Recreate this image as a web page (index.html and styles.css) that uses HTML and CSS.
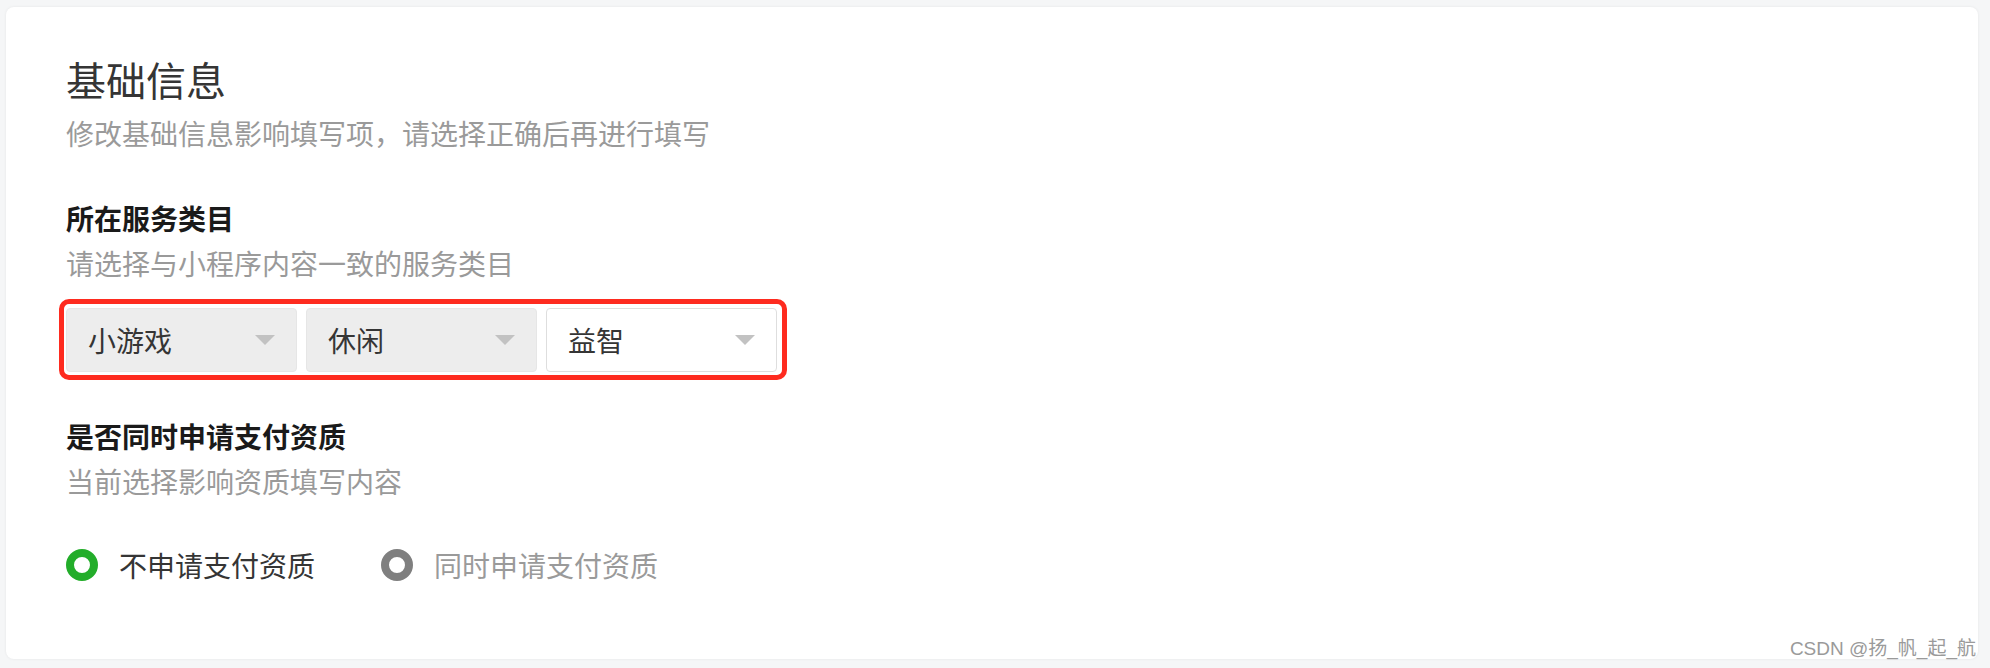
FILE: index.html
```html
<!DOCTYPE html>
<html lang="zh-CN">
<head>
<meta charset="utf-8">
<title>基础信息</title>
<link rel="stylesheet" href="styles.css">
</head>
<body>
<div class="page">
  <section class="card">
    <h1 class="title">基础信息</h1>
    <p class="desc">修改基础信息影响填写项，请选择正确后再进行填写</p>

    <h2 class="label label-first">所在服务类目</h2>
    <p class="desc desc-tight">请选择与小程序内容一致的服务类目</p>

    <div class="highlight">
      <div class="select select-disabled"><span class="select-text">小游戏</span><span class="arrow"></span></div>
      <div class="select select-disabled"><span class="select-text">休闲</span><span class="arrow"></span></div>
      <div class="select"><span class="select-text">益智</span><span class="arrow"></span></div>
    </div>

    <h2 class="label label-second">是否同时申请支付资质</h2>
    <p class="desc desc-tight">当前选择影响资质填写内容</p>

    <div class="radios">
      <label class="radio radio-on"><span class="dot"></span><span class="radio-text">不申请支付资质</span></label>
      <label class="radio radio-off"><span class="dot"></span><span class="radio-text">同时申请支付资质</span></label>
    </div>

    <div class="watermark">CSDN @扬_帆_起_航</div>
  </section>
</div>
</body>
</html>
```

FILE: styles.css
```css
html, body {
  margin: 0;
  padding: 0;
  background: #f5f6f7;
}

body {
  font-family: "Noto Sans CJK SC", "Noto Sans", sans-serif;
  color: #353535;
}

.page {
  padding: 7px 12px 9px 6px;
}

.card {
  position: relative;
  background: #ffffff;
  border-radius: 8px;
  box-shadow: 0 0 3px rgba(0, 0, 0, 0.07);
  height: 652px;
  box-sizing: border-box;
  padding: 44px 60px 0 60px;
}

.title {
  margin: 0;
  font-size: 40px;
  line-height: 56px;
  font-weight: 400;
  color: #353535;
}

.desc {
  margin: 6px 0 0 0;
  font-size: 28px;
  line-height: 40px;
  color: #9a9a9a;
}

.desc-tight {
  margin-top: 5px;
}

.label {
  margin: 0;
  font-size: 28px;
  line-height: 40px;
  font-weight: 700;
  color: #1a1a1a;
}

.label-first {
  margin-top: 45px;
}

.label-second {
  margin-top: 36px;
}

.highlight {
  display: inline-flex;
  gap: 9px;
  margin: 16px 0 0 -7px;
  padding: 4px 5px 3px 2px;
  border: 5px solid #fe2b1f;
  border-radius: 10px;
}

.select {
  box-sizing: border-box;
  width: 231px;
  height: 64px;
  display: flex;
  align-items: center;
  justify-content: space-between;
  padding: 0 21px 0 21px;
  border: 1px solid #dedede;
  border-radius: 4px;
  background: #ffffff;
}

.select-disabled {
  background: #ededed;
  border-color: #e6e6e6;
}

.select-text {
  font-size: 28px;
  line-height: 40px;
  color: #353535;
}

.arrow {
  width: 0;
  height: 0;
  border-left: 10px solid transparent;
  border-right: 10px solid transparent;
  border-top: 10px solid #c2c2c2;
}

.radios {
  display: flex;
  gap: 66px;
  margin-top: 44px;
}

.radio {
  display: flex;
  align-items: center;
  gap: 21px;
  font-size: 28px;
  line-height: 40px;
}

.dot {
  box-sizing: border-box;
  width: 32px;
  height: 32px;
  border-radius: 50%;
  border: 8px solid #7f7f7f;
  background: #ffffff;
}

.radio-on .dot {
  border-color: #23ad2a;
}

.radio-on .radio-text {
  color: #353535;
}

.radio-off .radio-text {
  color: #9a9a9a;
}

.watermark {
  position: absolute;
  right: 2px;
  bottom: -3px;
  font-family: "Liberation Sans", "Noto Sans CJK SC", sans-serif;
  font-size: 19px;
  line-height: 26px;
  color: #9a9a9a;
  text-shadow: 0 0 1px #ffffff;
}
```
